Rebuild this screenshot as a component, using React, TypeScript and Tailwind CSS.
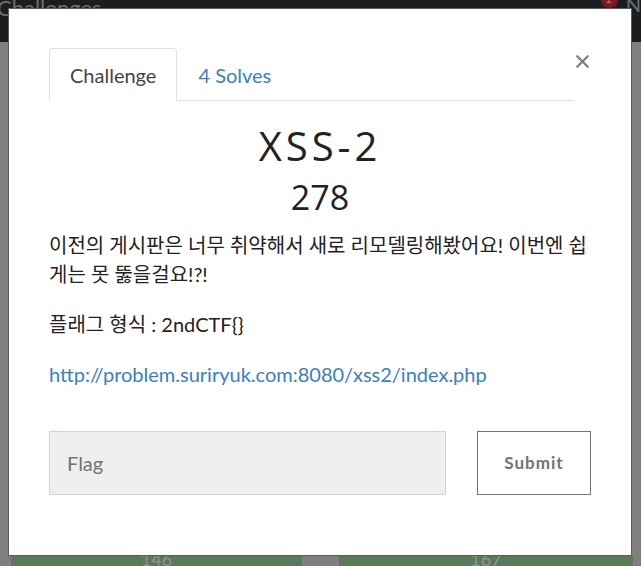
import { X } from "lucide-react"

export default function App() {
  return (
    <div className="relative h-[566px] w-[641px] overflow-hidden bg-[#7f7f7f] font-['Lato','Noto_Sans_CJK_KR',sans-serif]">
      {/* navbar behind the backdrop */}
      <div className="flex h-[42px] items-start justify-between bg-[#1b1e21]">
        <div className="-mt-[9px] -ml-[3px] text-[22px] text-[#6a6d70]">Challenges</div>
        <div className="-mt-[9px] flex items-start gap-[8px]">
          <div className="flex h-[17px] w-[17px] items-center justify-center rounded-full bg-[#7e1a1e] text-[9px] text-[#b88]">2</div>
          <div className="mt-[3px] text-[20px] leading-none text-[#6a6d70]">N</div>
        </div>
      </div>

      {/* cards behind the backdrop */}
      <div className="mt-[514px] flex gap-[37px] pl-[11px] pr-[8px]">
        <div className="flex h-[40px] w-[291px] justify-center bg-[#5a7958] text-[18px] leading-[18px] text-[#8d948c]">
          <span className="-mt-[6px]">146</span>
        </div>
        <div className="flex h-[40px] flex-1 justify-center bg-[#5a7958] text-[18px] leading-[18px] text-[#8d948c]">
          <span className="-mt-[6px]">167</span>
        </div>
      </div>

      {/* modal */}
      <div className="absolute left-[8px] top-[8px] h-[548px] w-[624px] border border-[#5c5c5c] bg-white">
        <div className="px-[40px] pt-[39px]">
          <div className="flex items-start">
            <div className="flex w-[525px] shrink-0 border-b border-[#dee2e6]">
              <div className="-mb-px h-[53px] rounded-t-[4px] border border-[#dee2e6] border-b-white bg-white px-[20px] pt-[11px] text-[20px] text-[#444]">
                Challenge
              </div>
              <div className="px-[21px] pt-[12px] text-[20px] text-[#3a7fc0]">4 Solves</div>
            </div>
            <button className="-ml-[2px] mt-[3px] shrink-0 text-[#7d7d7d]">
              <X size={21} strokeWidth={2.6} />
            </button>
          </div>

          <div className="mt-[21px] text-center font-['Open_Sans',sans-serif] text-[40px] leading-[48px] tracking-[4px] text-[#222]">
            XSS-2
          </div>
          <div className="mt-[5px] text-center font-['Open_Sans',sans-serif] text-[34px] leading-[44px] text-[#222]">
            278
          </div>

          <div className="mt-[12px] text-[20px] leading-[29px] text-[#222]">
            <p>이전의 게시판은 너무 취약해서 새로 리모델링해봤어요! 이번엔 쉽게는 못 뚫을걸요!?!</p>
            <p className="mt-[21px]">플래그 형식 : 2ndCTF{"{}"}</p>
            <p className="mt-[21px]">
              <a className="text-[#3a7fc0]">http://problem.suriryuk.com:8080/xss2/index.php</a>
            </p>
          </div>

          <div className="mt-[42px] flex gap-[31px]">
            <div className="flex h-[64px] w-[397px] items-center border border-[#ced4da] bg-[#efefef] px-[17px] text-[20px] text-[#6c757d]">
              Flag
            </div>
            <button className="h-[64px] w-[114px] border border-[#6c757d] text-[17px] font-bold tracking-[1px] text-[#6c757d]">
              Submit
            </button>
          </div>
        </div>
      </div>
    </div>
  )
}
